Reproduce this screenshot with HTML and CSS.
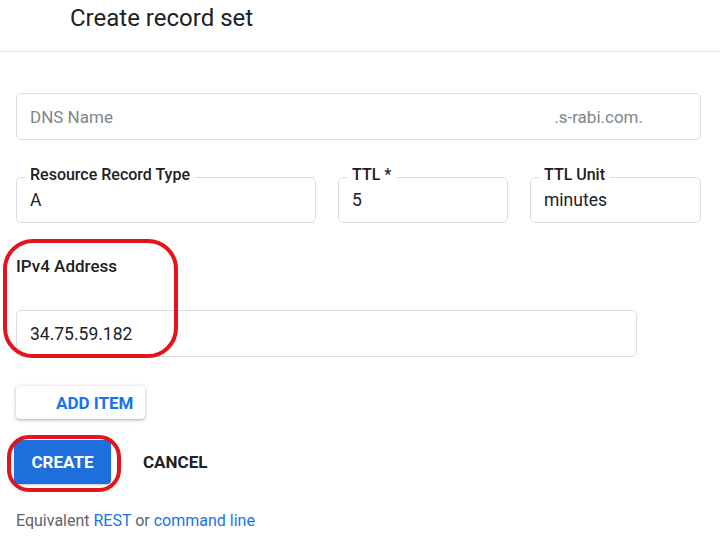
FILE: index.html
```html
<!DOCTYPE html>
<html>
<head>
<meta charset="utf-8">
<link rel="stylesheet" href="styles.css">
</head>
<body>
<header class="header">
  <h1 class="title">Create record set</h1>
</header>
<main class="form">
  <div class="dns-field">
    <span class="placeholder">DNS Name</span>
    <span class="suffix">.s-rabi.com.</span>
  </div>
  <div class="row">
    <fieldset class="outlined rrt">
      <legend>Resource Record Type</legend>
      <span class="value">A</span>
    </fieldset>
    <fieldset class="outlined ttl">
      <legend>TTL *</legend>
      <span class="value">5</span>
    </fieldset>
    <fieldset class="outlined unit">
      <legend>TTL Unit</legend>
      <span class="value">minutes</span>
    </fieldset>
  </div>
  <div class="ipv4">
    <div class="ipv4-label">IPv4 Address</div>
    <div class="ipv4-field"><span class="value">34.75.59.182</span></div>
    <div class="ring ring-ipv4"></div>
  </div>
  <button class="add-btn">ADD ITEM</button>
  <div class="actions">
    <button class="create-btn">CREATE</button>
    <button class="cancel-btn">CANCEL</button>
    <div class="ring ring-create"></div>
  </div>
  <p class="equiv">Equivalent <a href="#">REST</a> or <a href="#">command line</a></p>
</main>
</body>
</html>
```
FILE: styles.css
```css
* { box-sizing: border-box; }
body {
  margin: 0;
  background: #fff;
  font-family: Roboto, "Noto Sans", Arial, sans-serif;
  color: #202124;
}
.header {
  height: 52px;
  border-bottom: 1px solid #e3e3e3;
  padding-left: 70px;
}
.title {
  margin: 0;
  font-size: 24px;
  font-weight: 400;
  line-height: 37px;
  color: #202124;
}
.form {
  padding: 41px 0 0 16px;
  display: flex;
  flex-direction: column;
  align-items: flex-start;
}
.dns-field {
  width: 685px;
  height: 47px;
  border: 1px solid #dadce0;
  border-radius: 5px;
  display: flex;
  align-items: center;
  justify-content: space-between;
  padding: 0 57px 0 13px;
  font-size: 17px;
  color: #80868b;
}
.row {
  display: flex;
  gap: 22px;
  margin-top: 29px;
}
.outlined {
  margin: 0;
  height: 54px;
  border: 1px solid #dadce0;
  border-radius: 5px;
  padding: 0 13px;
  display: flex;
  align-items: center;
  min-width: 0;
}
.outlined legend {
  font-size: 16px;
  font-weight: 500;
  color: #202124;
  padding: 0 5px;
  margin-left: -5px;
  line-height: 16px;
  position: relative;
  top: -2px;
}
.rrt { width: 300px; }
.ttl { width: 170px; }
.unit { width: 171px; }
.value {
  font-size: 17.5px;
  color: #202124;
  line-height: 20px;
  margin-top: -8px;
}
.ipv4 {
  position: relative;
  margin-top: 33px;
}
.ipv4-label {
  font-size: 17px;
  font-weight: 500;
  line-height: 20px;
}
.ipv4-field {
  margin-top: 34px;
  width: 621px;
  height: 47px;
  border: 1px solid #dadce0;
  border-radius: 5px;
  display: flex;
  align-items: center;
  padding: 0 13px;
}
.ipv4-field .value { margin-top: 0; }
.ring {
  position: absolute;
  border: 4px solid #e3141c;
  pointer-events: none;
}
.ring-ipv4 {
  left: -13px;
  top: -17px;
  width: 175px;
  height: 119px;
  border-radius: 30px;
}
.add-btn {
  margin-top: 29px;
  height: 33px;
  width: 129px;
  background: #fff;
  border: none;
  border-radius: 4px;
  box-shadow: 0 1px 2px rgba(60,64,67,0.3), 0 1px 4px 1px rgba(60,64,67,0.15);
  font-family: inherit;
  font-size: 17px;
  font-weight: 700;
  color: #1a73e8;
  padding: 0 8px 0 40px;
  text-align: left;
}
.actions {
  position: relative;
  display: flex;
  align-items: center;
  gap: 32px;
  margin-top: 21px;
}
.create-btn {
  margin-left: -2px;
  width: 97px;
  height: 44px;
  background: #1e6fdc;
  color: #fff;
  border: none;
  border-radius: 4px;
  font-family: inherit;
  font-size: 17px;
  font-weight: 700;
  box-shadow: 0 1px 2px rgba(60,64,67,0.3);
}
.cancel-btn {
  background: none;
  border: none;
  padding: 0;
  font-family: inherit;
  font-size: 17px;
  font-weight: 700;
  color: #202124;
}
.ring-create {
  left: -9px;
  top: -5px;
  width: 114px;
  height: 57px;
  border-radius: 22px;
}
.equiv {
  margin: 27px 0 0;
  font-size: 16px;
  color: #5f6368;
  line-height: 20px;
}
.equiv a {
  color: #1a73e8;
  text-decoration: none;
  border-bottom: 1px solid #1a73e8;
  padding-bottom: 3px;
}
```
